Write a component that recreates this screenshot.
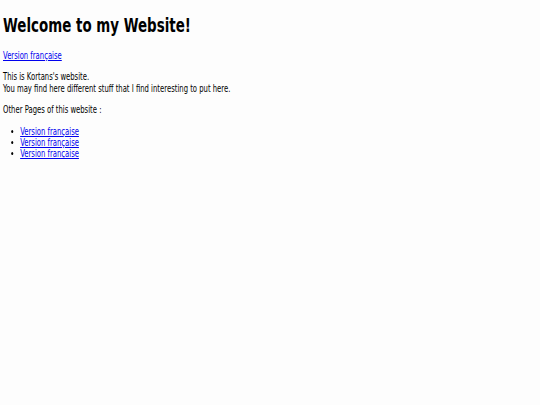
export default function App() {
  return (
    <div
      className="min-h-[405px] bg-[#fdfdfd] px-[3px] py-px text-[10px] leading-[11.4px] text-black"
      style={{ fontFamily: '"DejaVu Sans", sans-serif' }}
    >
      <div className="origin-top-left [transform:scaleX(0.685)]">
        <h1 className="my-[13px] text-[19.6px] font-bold leading-[23px]">Welcome to my Website!</h1>
        <p className="my-[10px]">
          <a href="#" className="text-[#0000ee] underline">Version française</a>
        </p>
        <p className="my-[10px]">
          This is Kortans's website.
          <br />
          You may find here different stuff that I find interesting to put here.
        </p>
        <p className="my-[10px]">Other Pages of this website :</p>
        <ul className="my-[10px] list-disc pl-[25px]">
          <li><a href="#" className="text-[#0000ee] underline">Version française</a></li>
          <li><a href="#" className="text-[#0000ee] underline">Version française</a></li>
          <li><a href="#" className="text-[#0000ee] underline">Version française</a></li>
        </ul>
      </div>
    </div>
  );
}
